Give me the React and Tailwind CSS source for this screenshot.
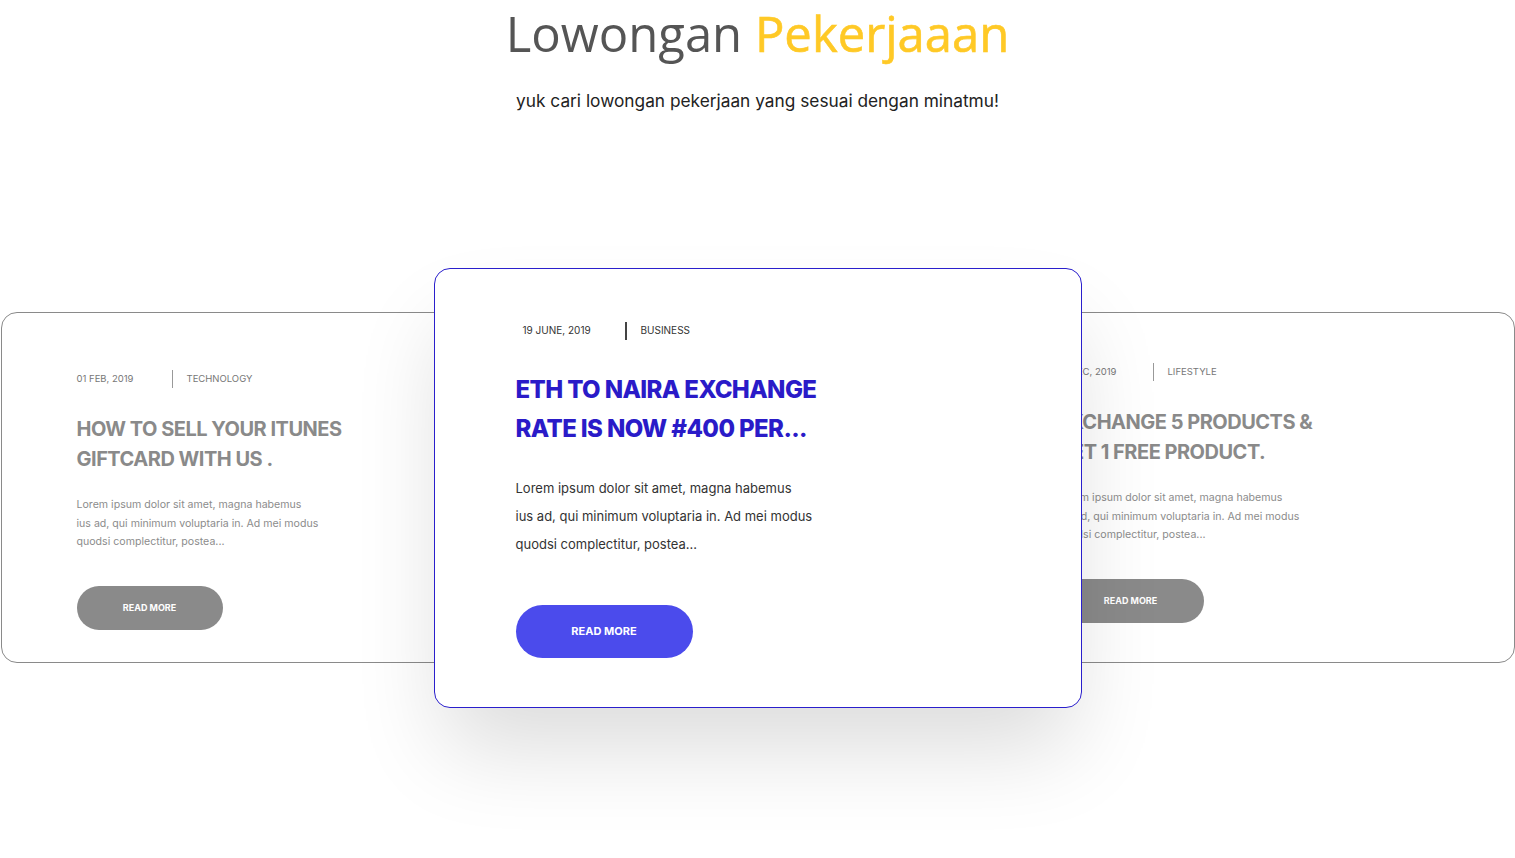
export default function App() {
  const body = [
    "Lorem ipsum dolor sit amet, magna habemus",
    "ius ad, qui minimum voluptaria in. Ad mei modus",
    "quodsi complectitur, postea...",
  ];
  const pop = { fontFamily: "Inter, 'Open Sans', sans-serif" };

  const SideCard = ({ date, cat, title, pt }) => (
    <div
      className={`w-[533px] h-[351px] shrink-0 rounded-[16px] border border-[#8a8a8a] bg-white pl-[75px] ${pt}`}
      style={pop}
    >
      <div className="flex items-center text-[9.5px] text-[#777] h-[18px]">
        <span className="w-[95px]">{date}</span>
        <span className="w-px h-[18px] bg-[#999] mr-[14px]"></span>
        <span>{cat}</span>
      </div>
      <h3 className="mt-[26px] text-[20px] leading-[30px] font-bold text-[#8a8a8a] tracking-[-0.5px]">
        {title.map((t) => (
          <div key={t}>{t}</div>
        ))}
      </h3>
      <div className="mt-[22px] text-[10.6px] leading-[18.5px] text-[#8c8c8c]">
        {body.map((t) => (
          <div key={t}>{t}</div>
        ))}
      </div>
      <button className="mt-[34px] w-[146px] h-[44px] rounded-full bg-[#8a8a8a] text-white text-[9px] font-bold">
        READ MORE
      </button>
    </div>
  );

  return (
    <div className="w-[1515px] h-[858px] bg-white overflow-hidden">
      <div className="text-center pt-[2px]">
        <h1
          className="text-[49px] leading-[62px] tracking-[0px] text-[#555555] font-normal"
          style={{ fontFamily: "'Open Sans', sans-serif" }}
        >
          Lowongan <span className="text-[#ffc926] [-webkit-text-stroke:0.6px_#ffc926]">Pekerjaaan</span>
        </h1>
        <p className="mt-[24px] text-[17.3px] text-[#222]" style={pop}>
          yuk cari lowongan pekerjaan yang sesuai dengan minatmu!
        </p>
      </div>

      <div className="mt-[154px] flex items-center justify-center">
        <SideCard
          date="01 FEB, 2019"
          cat="TECHNOLOGY"
          title={["HOW TO SELL YOUR ITUNES", "GIFTCARD WITH US ."]}
          pt="pt-[57px]"
        />
        <div
          className="relative z-10 -mx-[100px] w-[648px] h-[440px] shrink-0 rounded-[16px] border border-[#2a1fcc] bg-white pl-[81px] pt-[53px] shadow-[0_50px_90px_-10px_rgba(0,0,0,0.14)]"
          style={pop}
        >
          <div className="flex items-center text-[10px] text-[#333] h-[18px] pl-[7px]">
            <span className="w-[102px]">19 JUNE, 2019</span>
            <span className="w-[2px] h-[18px] bg-[#444] mr-[14px]"></span>
            <span>BUSINESS</span>
          </div>
          <h2 className="mt-[30px] text-[24px] leading-[39px] font-extrabold text-[#2a1bc8] tracking-[-0.6px]">
            <div>ETH TO NAIRA EXCHANGE</div>
            <div>RATE IS NOW #400 PER...</div>
          </h2>
          <div className="mt-[26px] text-[13px] leading-[28px] text-[#333]">
            {body.map((t) => (
              <div key={t}>{t}</div>
            ))}
          </div>
          <button className="mt-[47px] w-[177px] h-[53px] rounded-full bg-[#4b4bec] text-white text-[11px] font-bold">
            READ MORE
          </button>
        </div>
        <SideCard
          date="01 DEC, 2019"
          cat="LIFESTYLE"
          title={["EXCHANGE 5 PRODUCTS &", "GET 1 FREE PRODUCT."]}
          pt="pt-[50px]"
        />
      </div>
    </div>
  );
}
